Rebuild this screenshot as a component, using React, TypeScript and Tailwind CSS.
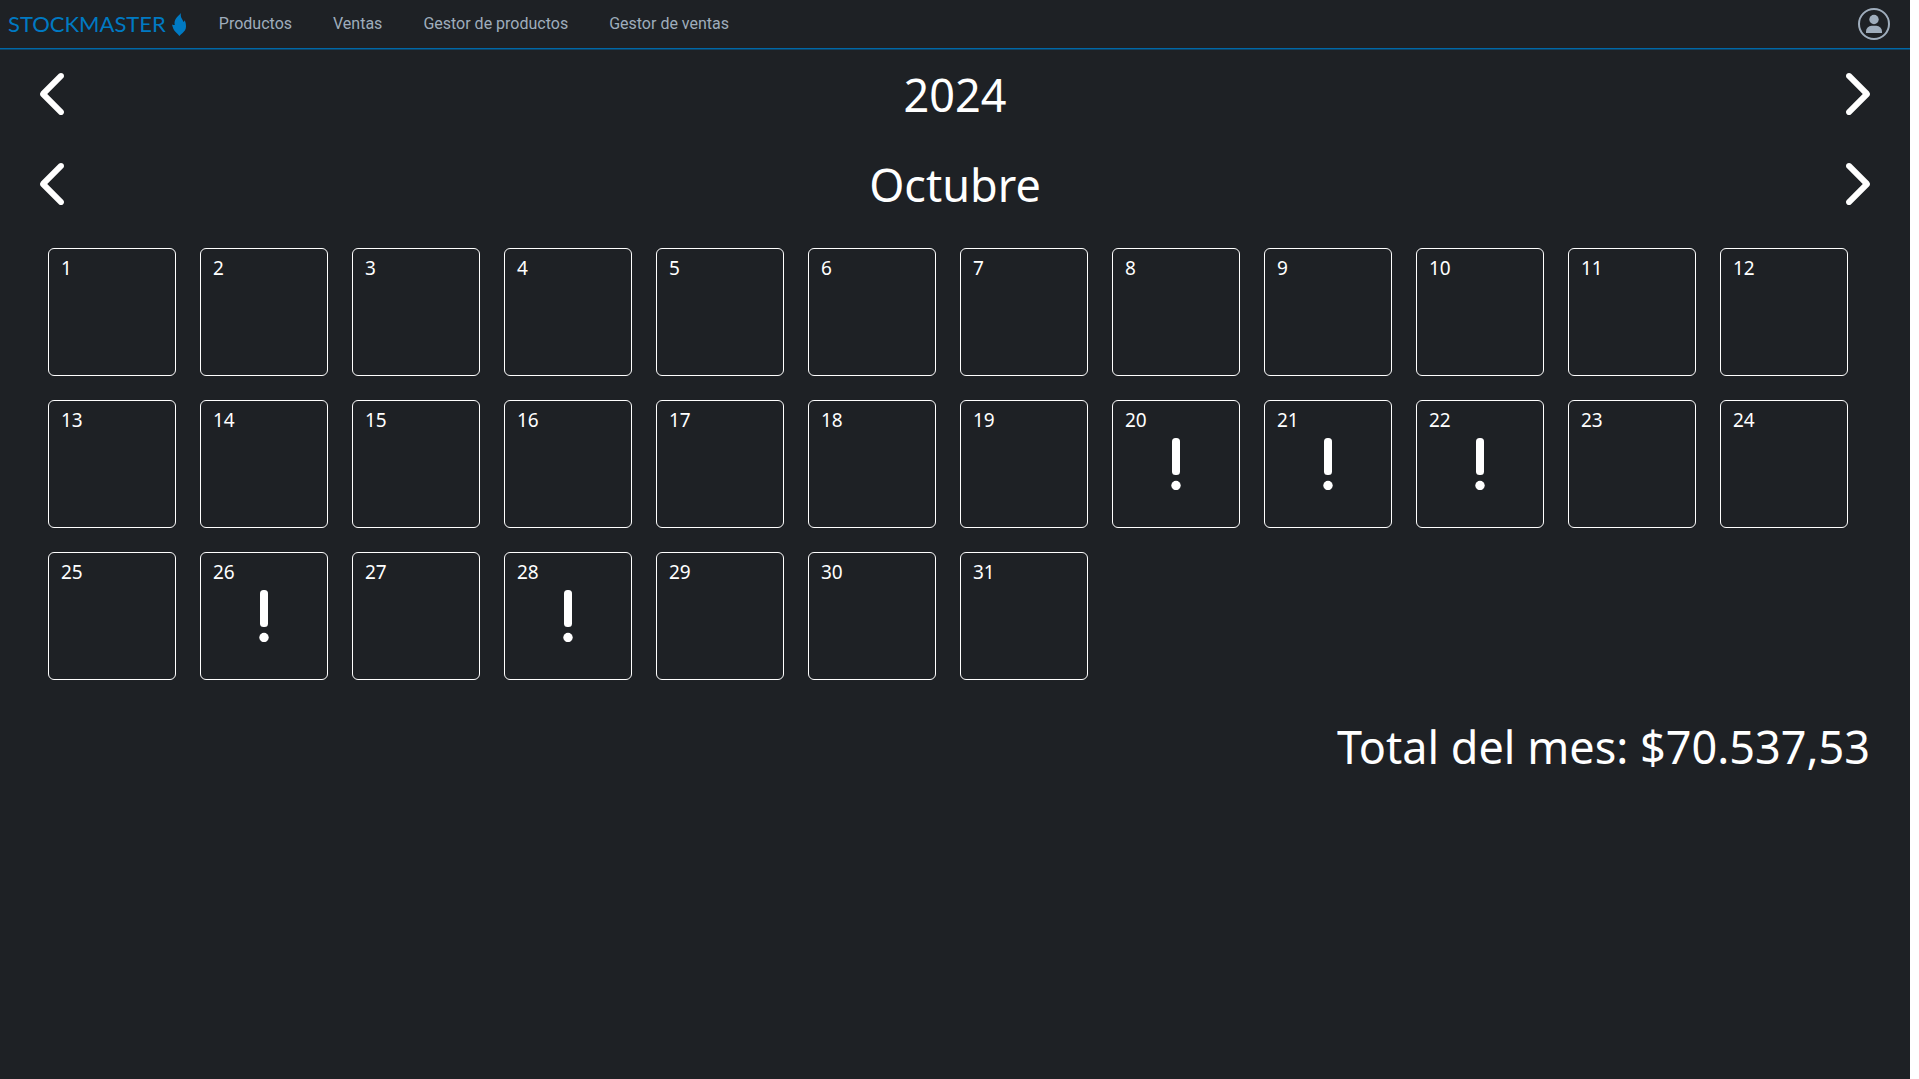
import { FaChevronLeft, FaChevronRight } from "react-icons/fa6";

const links = ["Productos", "Ventas", "Gestor de productos", "Gestor de ventas"];
const days = Array.from({ length: 31 }, (_, i) => i + 1);
const daysWithSales = [20, 21, 22, 26, 28];

function Flame() {
  return (
    <svg viewBox="0 0 14 23" className="h-[23px] w-3.5" fill="currentColor" aria-hidden="true">
      <path d="M9 0C8.4 2.2 8.9 4 9.9 5.8C10.6 7 11.2 8 11.5 9C12.1 8.6 12.5 8 12.7 7.2C13.8 9.6 14 11.6 14 13.6C14 16.4 12.6 18.4 10.6 20C9.4 21 8.2 21.8 7.4 23C6.4 21.6 5 20.4 3.6 19C1.6 17.2 .8 14.6 0 11.4C1.2 11.9 2 12.1 2.8 12C2.2 9.8 2.6 7.4 4 5.4C5.4 3.4 7.2 2 9 0Z" />
    </svg>
  );
}

function UserIcon() {
  return (
    <svg viewBox="0 0 32 32" className="size-8" aria-hidden="true">
      <circle cx="16" cy="16" r="15" fill="none" stroke="currentColor" strokeWidth="2" />
      <circle cx="16" cy="11.5" r="4.7" fill="currentColor" />
      <path d="M8 25V23.4A5.6 5.6 0 0 1 13.6 17.8H18.4A5.6 5.6 0 0 1 24 23.4V25Z" fill="currentColor" />
    </svg>
  );
}

function Exclamation() {
  return (
    <svg viewBox="0 0 10 52" className="h-[52px] w-2.5" fill="currentColor" role="img" aria-label="Ventas registradas">
      <rect x="1" y="0" width="8" height="37" rx="3.5" />
      <circle cx="5" cy="47.5" r="4.7" />
    </svg>
  );
}

function Selector({ value, unit }: { value: string; unit: string }) {
  return (
    <div className="flex h-[90px] items-center justify-between px-10">
      <button type="button" aria-label={`${unit} anterior`}>
        <FaChevronLeft className="h-12 w-[30px]" />
      </button>
      <h2 className="text-[45px] leading-[59px]">{value}</h2>
      <button type="button" aria-label={`${unit} siguiente`}>
        <FaChevronRight className="h-12 w-[30px]" />
      </button>
    </div>
  );
}

export default function App() {
  return (
    <div className="min-h-screen bg-white pr-[9px]">
      <div className="min-h-screen bg-[#1e2125] font-['Noto_Sans',sans-serif] text-white">
        <header className="flex h-[49px] items-center border-b border-[#0068a8] pr-5 pl-2 shadow-[0_1px_0_#0f4364]">
          <a href="#" className="flex items-center gap-1.5 font-['Lato',sans-serif] text-[22px] leading-7 text-[#007ac3]">
            STOCKMASTER
            <Flame />
          </a>
          <nav className="ml-[33px] flex gap-[41px] font-['Roboto',sans-serif] text-base text-[#9fadbc]">
            {links.map((l) => (
              <a key={l} href="#">{l}</a>
            ))}
          </nav>
          <button type="button" aria-label="Cuenta" className="ml-auto text-[#9fadbc]">
            <UserIcon />
          </button>
        </header>
        <main>
          <Selector value="2024" unit="Año" />
          <Selector value="Octubre" unit="Mes" />
          <ul className="mt-[19px] flex flex-wrap gap-6 px-12">
            {days.map((d) => (
              <li key={d} className="relative flex size-32 items-center justify-center rounded-md border border-white">
                <span className="absolute top-1.5 left-3 text-[19px] leading-[26px]">{d}</span>
                {daysWithSales.includes(d) && <Exclamation />}
              </li>
            ))}
          </ul>
          <p className="mt-[35px] px-10 text-right text-[45px] leading-[64px]">Total del mes: $70.537,53</p>
        </main>
      </div>
    </div>
  );
}
